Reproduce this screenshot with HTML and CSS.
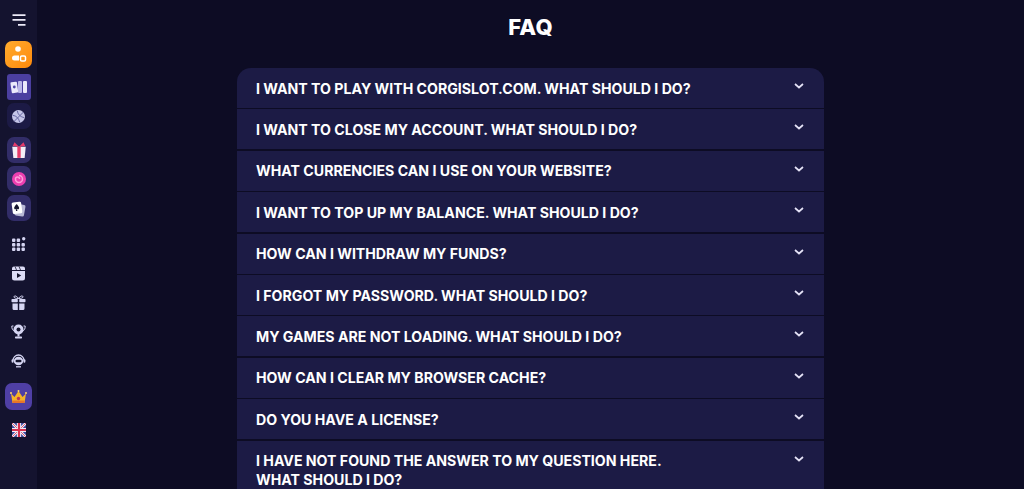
FILE: index.html
```html
<!DOCTYPE html>
<html lang="en">
  <head>
    <meta charset="UTF-8" />
    <meta name="viewport" content="width=device-width, initial-scale=1.0" />
    <title>FAQ</title>
    <link rel="stylesheet" href="styles.css">
  </head>
  <body>
    <aside class="sidebar">
      <button class="menu-btn" aria-label="Menu">
        <svg width="14" height="12" viewBox="0 0 14 12"><path d="M0.500 1.200h13M0.500 5.800h13M6 10.800h7.500" stroke="#eceaf8" stroke-width="1.800" fill="none"/></svg>
      </button>

      <div class="tile tile-orange tile-first">
        <svg width="16" height="20" viewBox="0 0 16 20"><circle cx="7" cy="4" r="2.800" fill="#fff"/><path d="M1 13a2.500 2.500 0 0 1 2.500-2.500H8v5H3.500A2.500 2.500 0 0 1 1 13z" fill="#fff"/><rect x="9.500" y="11" width="5" height="5" rx="1.300" fill="none" stroke="#fff" stroke-width="1.500"/></svg>
      </div>
      <div class="tile tile-purple">
        <svg width="18" height="17" viewBox="0 0 18 17"><rect x="1" y="3" width="6.500" height="11" rx="1" fill="#ece9fb" transform="rotate(-8 4 8)"/><rect x="8" y="2" width="4" height="12" rx="1" fill="#bdb8ea"/><rect x="13" y="2" width="4" height="12" rx="1" fill="#ece9fb"/><circle cx="4.300" cy="8" r="1.400" fill="#4f46a8"/></svg>
      </div>
      <div class="tile tile-dark">
        <svg width="15" height="15" viewBox="0 0 15 15"><circle cx="7.500" cy="7.500" r="6.500" fill="#c5c5e8"/><path d="M3 12.500 12.500 3M2 6.500c3 0 6 3 6.500 6.500M6.500 2c0 3 3 6 6.500 6.500" stroke="#5a5a98" stroke-width=".9" fill="none"/></svg>
      </div>
      <div class="tile tile-muted">
        <svg width="18" height="18" viewBox="0 0 16 16"><path d="M2 5h12l-1 10H3z" fill="#f4eef6"/><rect x="6.500" y="5" width="3" height="10" fill="#e83a6a"/><path d="M8 5 4 1 2.500 4.500zM8 5l4-4 1.500 3.500z" fill="#e83a6a"/></svg>
      </div>
      <div class="tile tile-muted">
        <svg width="16" height="16" viewBox="0 0 16 16"><circle cx="8" cy="8" r="7" fill="#ec3fb0"/><path d="M8 4.500a3.500 3.500 0 1 1-3.500 3.500 2 2 0 0 1 4 0" stroke="#ffa0dc" stroke-width="1.500" fill="none"/></svg>
      </div>
      <div class="tile tile-muted">
        <svg width="17" height="17" viewBox="0 0 16 16"><rect x="5" y="4" width="9" height="11" rx="1.500" fill="#b9b9d6" transform="rotate(10 9 9)"/><rect x="2" y="2" width="9" height="11" rx="1.500" fill="#fff" transform="rotate(-8 6 7)"/><path d="M6.500 4c1 1.500 2.500 2.500 2 4-.3 1-1.400 1-2 .3l.5 2h-1.500l.5-2c-.6.700-1.700.700-2-.3-.5-1.500 1-2.500 2-4z" fill="#15152e"/></svg>
      </div>

      <div class="nav-icon nav-first">
        <svg width="15" height="15" viewBox="0 0 15 15" fill="#d5d5f2"><rect x="1" y="1.500" width="3.400" height="3.400" rx="1"/><rect x="5.700" y="1.500" width="3.400" height="3.400" rx="1"/><rect x="11" y="0" width="3.400" height="3.400" rx="1.700"/><rect x="1" y="6" width="3.400" height="3.400" rx="1"/><rect x="5.700" y="6" width="3.400" height="3.400" rx="1"/><rect x="10.500" y="6" width="3.400" height="3.400" rx="1"/><rect x="1" y="10.500" width="3.400" height="3.400" rx="1"/><rect x="5.700" y="10.500" width="3.400" height="3.400" rx="1"/><rect x="10.500" y="10.500" width="3.400" height="3.400" rx="1"/></svg>
      </div>
      <div class="nav-icon">
        <svg width="15" height="15" viewBox="0 0 15 15"><path d="M1 5h13v7a2.500 2.500 0 0 1-2.500 2.500h-8A2.500 2.500 0 0 1 1 12z" fill="#dcdcf6"/><path d="M1 4V2.500A2 2 0 0 1 3 .5h9a2 2 0 0 1 2 2V4z" fill="#dcdcf6"/><path d="M4 .5l1.500 3.500M8 .5l1.500 3.500" stroke="#14142c" stroke-width=".8"/><path d="M6 7v5l4.200-2.500z" fill="#14142c"/></svg>
      </div>
      <div class="nav-icon">
        <svg width="15" height="15" viewBox="0 0 15 15" fill="#d5d5f2"><rect x="0.500" y="4" width="6.300" height="3.300" rx=".8"/><rect x="8.200" y="4" width="6.300" height="3.300" rx=".8"/><path d="M1.500 8.500h5.300V15H3a1.500 1.500 0 0 1-1.500-1.500zM8.200 8.500h5.300v5a1.500 1.500 0 0 1-1.500 1.500H8.200z"/><path d="M7.500 3.500C6 1 3 0 3 2c0 1 2 1.500 4.500 1.500zM7.500 3.500C9 1 12 0 12 2c0 1-2 1.500-4.500 1.500z" stroke="#d5d5f2" fill="none"/></svg>
      </div>
      <div class="nav-icon">
        <svg width="15" height="15" viewBox="0 0 15 15"><circle cx="7.500" cy="5.500" r="5" fill="#d5d5f2"/><path d="M2.500 2H.8c0 3 .8 4.500 2.700 5M12.500 2h1.700c0 3-.8 4.500-2.700 5" stroke="#d5d5f2" fill="none"/><path d="M6.500 10h2v2.500h-2z" fill="#d5d5f2"/><rect x="4" y="12.500" width="7" height="2" rx=".7" fill="#d5d5f2"/><circle cx="7.500" cy="5.500" r="2" fill="#14142c"/></svg>
      </div>
      <div class="nav-icon">
        <svg width="15" height="15" viewBox="0 0 15 15"><path d="M2 7.500a5.500 5.500 0 0 1 11 0" stroke="#d5d5f2" stroke-width="1.300" fill="none"/><ellipse cx="7.500" cy="8" rx="4.700" ry="4.300" fill="#d5d5f2"/><rect x="4.500" y="6.800" width="6" height="2.400" rx="1.200" fill="#14142c"/><rect x=".6" y="6.200" width="2" height="3.600" rx="1" fill="#d5d5f2"/><rect x="12.400" y="6.200" width="2" height="3.600" rx="1" fill="#d5d5f2"/><path d="M5 13.800h5" stroke="#d5d5f2" stroke-width="1.300"/></svg>
      </div>

      <div class="tile tile-crown">
        <svg width="17" height="14" viewBox="0 0 17 14"><path d="M1 3.500 4.500 7 8.500 1l4 6L16 3.500 14.500 13h-12z" fill="#f5b428"/><rect x="2.500" y="10.500" width="12" height="2.500" fill="#e8742a"/><circle cx="8.500" cy="8.500" r="1.700" fill="#b8355a"/><circle cx="1" cy="3" r="1" fill="#ffd76a"/><circle cx="16" cy="3" r="1" fill="#ffd76a"/><circle cx="8.500" cy="1" r="1" fill="#ffd76a"/></svg>
      </div>
      <div class="flag">
        <svg width="14" height="14" viewBox="0 0 14 14"><rect width="14" height="14" rx="1.500" fill="#3d4a9e"/><path d="M0 0 14 14M14 0 0 14" stroke="#f0eef8" stroke-width="2.600"/><path d="M0 0 14 14M14 0 0 14" stroke="#d8304f" stroke-width=".8"/><path d="M7 0v14M0 7h14" stroke="#f0eef8" stroke-width="4.200"/><path d="M7 0v14M0 7h14" stroke="#d8304f" stroke-width="2.200"/></svg>
      </div>
    </aside>

    <main class="content">
      <h1 class="title">FAQ</h1>
      <div class="faq">
        <div class="faq-item"><span>I want to play with corgislot.com. What should I do?</span><svg class="chevron" width="10" height="6" viewBox="0 0 10 6"><path d="M1 1l4 3.500L9 1" /></svg></div>
        <div class="faq-item"><span>I want to close my account. What should I do?</span><svg class="chevron" width="10" height="6" viewBox="0 0 10 6"><path d="M1 1l4 3.500L9 1" /></svg></div>
        <div class="faq-item"><span>What currencies can I use on your website?</span><svg class="chevron" width="10" height="6" viewBox="0 0 10 6"><path d="M1 1l4 3.500L9 1" /></svg></div>
        <div class="faq-item"><span>I want to top up my balance. What should I do?</span><svg class="chevron" width="10" height="6" viewBox="0 0 10 6"><path d="M1 1l4 3.500L9 1" /></svg></div>
        <div class="faq-item"><span>How can I withdraw my funds?</span><svg class="chevron" width="10" height="6" viewBox="0 0 10 6"><path d="M1 1l4 3.500L9 1" /></svg></div>
        <div class="faq-item"><span>I forgot my password. What should I do?</span><svg class="chevron" width="10" height="6" viewBox="0 0 10 6"><path d="M1 1l4 3.500L9 1" /></svg></div>
        <div class="faq-item"><span>My games are not loading. What should I do?</span><svg class="chevron" width="10" height="6" viewBox="0 0 10 6"><path d="M1 1l4 3.500L9 1" /></svg></div>
        <div class="faq-item"><span>How can I clear my browser cache?</span><svg class="chevron" width="10" height="6" viewBox="0 0 10 6"><path d="M1 1l4 3.500L9 1" /></svg></div>
        <div class="faq-item"><span>Do you have a license?</span><svg class="chevron" width="10" height="6" viewBox="0 0 10 6"><path d="M1 1l4 3.500L9 1" /></svg></div>
        <div class="faq-item"><span>I have not found the answer to my question here.<br>What should I do?</span><svg class="chevron" width="10" height="6" viewBox="0 0 10 6"><path d="M1 1l4 3.500L9 1" /></svg></div>
      </div>
    </main>
  </body>
</html>
```

FILE: styles.css
```css
html,
body {
  height: 100%;
}
body {
  margin: 0;
  display: flex;
  overflow: hidden;
  background: #0d0c24;
  font-family: Inter, "Liberation Sans", sans-serif;
  color: #fff;
}
.sidebar {
  width: 37px;
  flex-shrink: 0;
  display: flex;
  flex-direction: column;
  align-items: center;
  background: #14132f;
  padding-top: 14px;
  box-sizing: border-box;
}
.menu-btn {
  width: 14px;
  height: 12px;
  padding: 0;
  border: none;
  background: none;
  display: flex;
  margin-left: 1px;
}
.tile {
  width: 24px;
  height: 26px;
  border-radius: 7px;
  display: flex;
  align-items: center;
  justify-content: center;
  background: #38306f;
  margin-bottom: 3px;
}
.tile-orange {
  width: 27px;
  height: 27px;
  background: linear-gradient(135deg, #ffab2e, #ff8a0c);
}
.tile-first {
  margin-top: 15px;
  margin-bottom: 6px;
}
.tile-purple {
  background: #4b3fa0;
  border-radius: 3px;
}
.tile-dark {
  background: #1c1a45;
  margin-bottom: 8px;
}
.tile-muted {
  background: #322d68;
}
.nav-icon {
  height: 15px;
  display: flex;
  margin-bottom: 14px;
}
.nav-first {
  margin-top: 13px;
}
.tile-crown {
  width: 27px;
  height: 27px;
  background: #4f3fa5;
  margin-top: 1px;
  margin-bottom: 13px;
}
.flag {
  height: 14px;
  display: flex;
}
.content {
  flex: 1;
  min-width: 0;
  display: flex;
  flex-direction: column;
  align-items: center;
}
.title {
  margin: 14px 0 0;
  font-size: 22px;
  line-height: 26px;
  font-weight: 800;
  letter-spacing: 0.2px;
}
.faq {
  width: 587px;
  margin-top: 28px;
  display: flex;
  flex-direction: column;
  gap: 1.4px;
  border-radius: 14px 14px 0 0;
  overflow: hidden;
}
.faq-item {
  flex-shrink: 0;
  display: flex;
  justify-content: space-between;
  align-items: flex-start;
  min-height: 40px;
  box-sizing: border-box;
  padding: 10.6px 20px 8.4px 19px;
  background: #1c1b45;
  font-size: 14.150px;
  line-height: 19px;
  font-weight: 700;
  text-transform: uppercase;
}
.chevron {
  margin-top: 4.400px;
  fill: none;
  stroke: #e4e2f6;
  stroke-width: 1.700;
}
```
